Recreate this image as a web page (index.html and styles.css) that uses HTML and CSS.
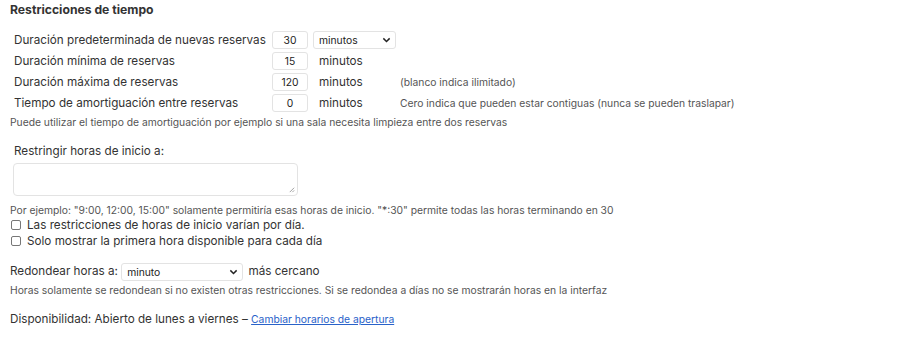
FILE: index.html
```html
<!DOCTYPE html>
<html lang="es">
<head>
<meta charset="utf-8">
<link rel="stylesheet" href="styles.css">
</head>
<body>
<div class="page">
  <h3 class="title">Restricciones de tiempo</h3>
  <div class="grid">
    <div class="lbl">Duración predeterminada de nuevas reservas</div>
    <div class="val"><span class="num">30</span><span class="sel small">minutos<svg class="chev" viewBox="0 0 10 6"><path d="M1.5 1.2 L5 4.6 L8.5 1.2" fill="none" stroke="#222" stroke-width="1.6"/></svg></span></div>
    <div class="note"></div>

    <div class="lbl">Duración mínima de reservas</div>
    <div class="val"><span class="num">15</span><span class="unit">minutos</span></div>
    <div class="note"></div>

    <div class="lbl">Duración máxima de reservas</div>
    <div class="val"><span class="num">120</span><span class="unit">minutos</span></div>
    <div class="note">(blanco indica ilimitado)</div>

    <div class="lbl">Tiempo de amortiguación entre reservas</div>
    <div class="val"><span class="num">0</span><span class="unit">minutos</span></div>
    <div class="note">Cero indica que pueden estar contiguas (nunca se pueden traslapar)</div>
  </div>
  <p class="help first">Puede utilizar el tiempo de amortiguación por ejemplo si una sala necesita limpieza entre dos reservas</p>

  <div class="restrict">
    <div class="rlabel">Restringir horas de inicio a:</div>
    <div class="textarea"><svg class="grip" viewBox="0 0 8 8"><path d="M7 2 L2 7 M7 5 L5 7" stroke="#888" stroke-width="0.9" fill="none"/></svg></div>
  </div>
  <p class="help ex">Por ejemplo: "9:00, 12:00, 15:00" solamente permitiría esas horas de inicio. "*:30" permite todas las horas terminando en 30</p>
  <label class="check"><span class="box"></span>Las restricciones de horas de inicio varían por día.</label>
  <label class="check"><span class="box"></span>Solo mostrar la primera hora disponible para cada día</label>

  <div class="round">Redondear horas a: <span class="sel wide">minuto<svg class="chev" viewBox="0 0 10 6"><path d="M1.5 1.2 L5 4.6 L8.5 1.2" fill="none" stroke="#222" stroke-width="1.6"/></svg></span> más cercano</div>
  <p class="help">Horas solamente se redondean si no existen otras restricciones. Si se redondea a días no se mostrarán horas en la interfaz</p>

  <div class="avail">Disponibilidad: Abierto de lunes a viernes – <a href="#">Cambiar horarios de apertura</a></div>
</div>
</body>
</html>
```
FILE: styles.css
```css
* { box-sizing: border-box; }
html, body { margin: 0; padding: 0; background: #fff; }
body {
  font-family: Inter, "Helvetica Neue", "Liberation Sans", Arial, sans-serif;
  color: #333;
  font-size: 11.7px;
}
.page { padding: 2px 10px 0 10px; }
.title {
  margin: 0;
  font-size: 12.2px;
  font-weight: 700;
  color: #333;
  line-height: 16px;
}
.grid {
  display: grid;
  grid-template-columns: 262px auto 1fr;
  margin-top: 13px;
  row-gap: 3px;
}
.lbl {
  padding-left: 4px;
  line-height: 18px;
  height: 18px;
  white-space: nowrap;
}
.val {
  display: flex;
  align-items: center;
  gap: 5px;
  height: 18px;
}
.num {
  width: 36px;
  height: 18px;
  border: 1px solid #e3e3e3;
  border-radius: 3px;
  font-size: 10.3px;
  color: #222;
  display: flex;
  align-items: center;
  justify-content: center;
}
.unit { padding-left: 6px; width: 81px; }
.sel {
  height: 18px;
  border: 1px solid #e3e3e3;
  border-radius: 3px;
  font-size: 10.3px;
  color: #222;
  display: inline-flex;
  align-items: center;
  justify-content: space-between;
  padding: 0 4px 0 5px;
  background: #fff;
}
.sel.small { width: 83px; }
.sel.wide { width: 122px; vertical-align: middle; margin: 0 2px 0 0; }
.chev { width: 9px; height: 6px; }
.note {
  font-size: 10.3px;
  color: #555;
  line-height: 18px;
  padding-left: 4px;
}
.help {
  margin: 2px 0 0 0;
  font-size: 10.3px;
  color: #555;
  line-height: 14px;
}
.help.first { margin-top: 3px; }
.restrict { margin-top: 14px; padding-left: 3px; }
.rlabel { padding-left: 1px; line-height: 16px; }
.textarea {
  margin-top: 4px;
  width: 285px;
  height: 33px;
  border: 1px solid #e3e3e3;
  border-radius: 4px;
  position: relative;
}
.grip { position: absolute; right: 2px; bottom: 2px; width: 7px; height: 7px; }
.ex { margin-top: 7px; }
.check {
  display: flex;
  align-items: center;
  line-height: 16px;
  padding-left: 1px;
}
.box {
  width: 10px;
  height: 10px;
  border: 1px solid #777;
  border-radius: 2px;
  margin-right: 6px;
}
.round { margin-top: 13px; line-height: 18px; }
.avail { margin-top: 14px; line-height: 16px; }
.avail a { color: #2962c9; font-size: 10.3px; }
```
